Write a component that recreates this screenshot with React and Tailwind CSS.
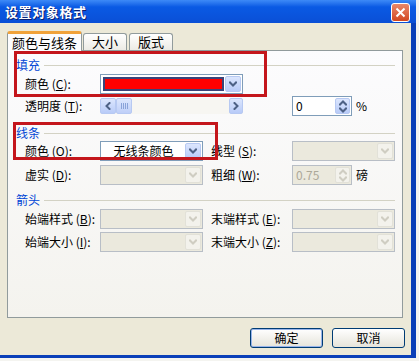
import React from "react";

const Chevron = ({ dir = "down", color = "#4d6185" }) => {
  const paths = {
    down: "M1 1.5 L4 4.5 L7 1.5",
    up: "M1 4.5 L4 1.5 L7 4.5",
    left: "M4.5 1 L1.5 4 L4.5 7",
    right: "M1.5 1 L4.5 4 L1.5 7",
  };
  const vertical = dir === "down" || dir === "up";
  return (
    <svg width={vertical ? 8 : 6} height={vertical ? 6 : 8} viewBox={vertical ? "0 0 8 6" : "0 0 6 8"}>
      <path d={paths[dir]} fill="none" stroke={color} strokeWidth="2" strokeLinecap="square" />
    </svg>
  );
};

const DropButton = ({ disabled }) => (
  <div
    className={`w-[16px] h-full flex items-center justify-center rounded-[2px] border ${
      disabled
        ? "bg-[#f3f2ec] border-[#e2e1d8]"
        : "bg-linear-to-b from-[#dce6fd] to-[#b8cbf8] border-[#b7c9f2]"
    }`}
  >
    <Chevron color={disabled ? "#cfcdc2" : "#4d6185"} />
  </div>
);

const Combo = ({ width, text, disabled }) => (
  <div
    className={`h-[20px] flex p-[1px] border ${
      disabled ? "bg-[#ebe9dd] border-[#b8bec6]" : "bg-white border-[#7f9db9]"
    }`}
    style={{ width }}
  >
    <div className="flex-1 flex items-center justify-center text-[12px] text-black">{text}</div>
    <DropButton disabled={disabled} />
  </div>
);

const Spin = ({ value, disabled }) => (
  <div
    className={`w-[60px] h-[20px] flex p-[1px] border ${
      disabled ? "bg-[#ebe9dd] border-[#b8bec6] text-[#aca899]" : "bg-white border-[#7f9db9] text-black"
    }`}
  >
    <div className="flex-1 flex items-center pl-[2px] text-[12px]">{value}</div>
    <div
      className={`w-[15px] h-full flex flex-col items-center justify-center gap-[1px] rounded-[2px] border ${
        disabled ? "bg-[#f3f2ec] border-[#e2e1d8]" : "bg-linear-to-b from-[#dce6fd] to-[#b8cbf8] border-[#b7c9f2]"
      }`}
    >
      <Chevron dir="up" color={disabled ? "#cfcdc2" : "#4d6185"} />
      <Chevron dir="down" color={disabled ? "#cfcdc2" : "#4d6185"} />
    </div>
  </div>
);

const Label = ({ text, k, wide }) => (
  <div className={`${wide ? "w-[81px] ml-[8px]" : "w-[75px] ml-[17px]"} text-[12px] text-black whitespace-nowrap`}>
    {text} (<span className="underline">{k}</span>):
  </div>
);

const Header = ({ text }) => (
  <div className="h-[16px] flex items-center pl-[8px] pr-[7px]">
    <span className="text-[12px] text-[#0046d5]">{text}</span>
    <div className="flex-1 h-px bg-[#d3d2c4] ml-[4px]" />
  </div>
);

const XPButton = ({ text, isDefault }) => (
  <button
    className={`w-[73px] h-[20px] rounded-[3px] border border-[#003c74] bg-linear-to-b from-white to-[#e6e4da] text-[12px] text-black flex items-center justify-center ${
      isDefault ? "shadow-[inset_0_0_0_1px_#98b4ea]" : ""
    }`}
  >
    {text}
  </button>
);

export default function App() {
  return (
    <div className="w-[419px] h-[361px] bg-[#f4f4f0] font-['Noto_Sans_CJK_SC','Noto_Sans',sans-serif]">
      <div className="w-[416px] h-[358px] bg-[#0a3fb8] flex flex-col">
        {/* title bar */}
        <div className="h-[23px] flex items-center justify-between pl-[5px] pr-[6px] bg-linear-to-b from-[#3d8af7] via-[#0a5ae4] via-30% to-[#0a4fd6]">
          <span className="text-white font-bold text-[13px] tracking-[0.6px] [text-shadow:1px_1px_#0a1e6e]">
            设置对象格式
          </span>
          <div className="w-[19px] h-[19px] mt-[1px] rounded-[3px] border border-white bg-linear-to-b from-[#e8876a] to-[#d2451c] flex items-center justify-center">
            <svg width="11" height="11" viewBox="0 0 11 11">
              <path d="M1.5 1.5 L9.5 9.5 M9.5 1.5 L1.5 9.5" stroke="white" strokeWidth="2" />
            </svg>
          </div>
        </div>

        {/* body */}
        <div className="flex-1 mr-[5px] mb-[3px] bg-[#ece9d8] pl-[7px] pt-[8px]">
          {/* tabs */}
          <div className="flex items-end h-[19px]">
            <div className="relative z-10 w-[75px] h-[20px] -mb-px bg-[#fcfcfe] border border-b-0 border-[#919b9c] border-t-[3px] border-t-[#f0a23a] rounded-t-[3px] flex items-center justify-center text-[13px] text-black">
              颜色与线条
            </div>
            <div className="ml-[1px] w-[44px] h-[17px] bg-linear-to-b from-white to-[#ecebe5] border border-b-0 border-[#919b9c] rounded-t-[3px] flex items-center justify-center text-[13px] text-black">
              大小
            </div>
            <div className="ml-[2px] w-[44px] h-[17px] bg-linear-to-b from-white to-[#ecebe5] border border-b-0 border-[#919b9c] rounded-t-[3px] flex items-center justify-center text-[13px] text-black">
              版式
            </div>
          </div>

          {/* panel */}
          <div className="relative w-[396px] h-[268px] border border-[#919b9c] bg-linear-to-b from-[#fcfcfe] to-[#f4f3ee]">
            <div className="mt-[6px]">
              <Header text="填充" />
            </div>
            <div className="flex items-center h-[20px] mt-[1px]">
              <Label text="颜色" k="C" />
              <div className="w-[143px] h-[20px] flex p-[1px] border border-[#7f9db9] bg-white">
                <div className="flex-1 p-[1px]">
                  <div className="w-full h-full border-2 border-[#3a4479] bg-[#ff0000]" />
                </div>
                <DropButton />
              </div>
            </div>
            <div className="flex items-center h-[20px] mt-[2px]">
              <Label text="透明度" k="T" />
              <div className="w-[143px] h-[16px] flex bg-[#f7f6f2]">
                <div className="w-[16px] h-full rounded-[2px] border border-[#b7c9f2] bg-linear-to-b from-[#dce6fd] to-[#b8cbf8] flex items-center justify-center">
                  <Chevron dir="left" />
                </div>
                <div className="w-[16px] h-full rounded-[2px] border border-[#b7c9f2] bg-linear-to-b from-[#dce6fd] to-[#bfcff8] flex items-center justify-center gap-[1px]">
                  <div className="w-px h-[6px] bg-[#8aa3d8]" />
                  <div className="w-px h-[6px] bg-[#8aa3d8]" />
                  <div className="w-px h-[6px] bg-[#8aa3d8]" />
                  <div className="w-px h-[6px] bg-[#8aa3d8]" />
                </div>
                <div className="flex-1" />
                <div className="w-[14px] h-full rounded-[2px] border border-[#b7c9f2] bg-linear-to-b from-[#dce6fd] to-[#b8cbf8] flex items-center justify-center">
                  <Chevron dir="right" />
                </div>
              </div>
              <div className="ml-[49px]">
                <Spin value="0" />
              </div>
              <span className="ml-[4px] text-[12px] text-black">%</span>
            </div>

            <div className="mt-[9px]">
              <Header text="线条" />
            </div>
            <div className="flex items-center h-[20px]">
              <Label text="颜色" k="O" />
              <Combo width={103} text="无线条颜色" />
              <Label text="线型" k="S" wide />
              <Combo width={103} disabled />
            </div>
            <div className="flex items-center h-[20px] mt-[4px]">
              <Label text="虚实" k="D" />
              <Combo width={103} disabled />
              <Label text="粗细" k="W" wide />
              <Spin value="0.75" disabled />
              <span className="ml-[4px] text-[12px] text-black">磅</span>
            </div>

            <div className="mt-[7px]">
              <Header text="箭头" />
            </div>
            <div className="flex items-center h-[20px] mt-[1px]">
              <Label text="始端样式" k="B" />
              <Combo width={103} disabled />
              <Label text="末端样式" k="E" wide />
              <Combo width={103} disabled />
            </div>
            <div className="flex items-center h-[20px] mt-[3px]">
              <Label text="始端大小" k="I" />
              <Combo width={103} disabled />
              <Label text="末端大小" k="Z" wide />
              <Combo width={103} disabled />
            </div>

            {/* annotation boxes */}
            <div className="absolute left-[6px] top-0 w-[253px] h-[46px] border-[3px] border-[#c4161c]" />
            <div className="absolute left-[5px] top-[71px] w-[205px] h-[38px] border-[3px] border-[#c4161c]" />
          </div>

          {/* buttons */}
          <div className="w-[398px] flex justify-end gap-[9px] mt-[10px]">
            <XPButton text="确定" isDefault />
            <XPButton text="取消" />
          </div>
        </div>
      </div>
    </div>
  );
}
